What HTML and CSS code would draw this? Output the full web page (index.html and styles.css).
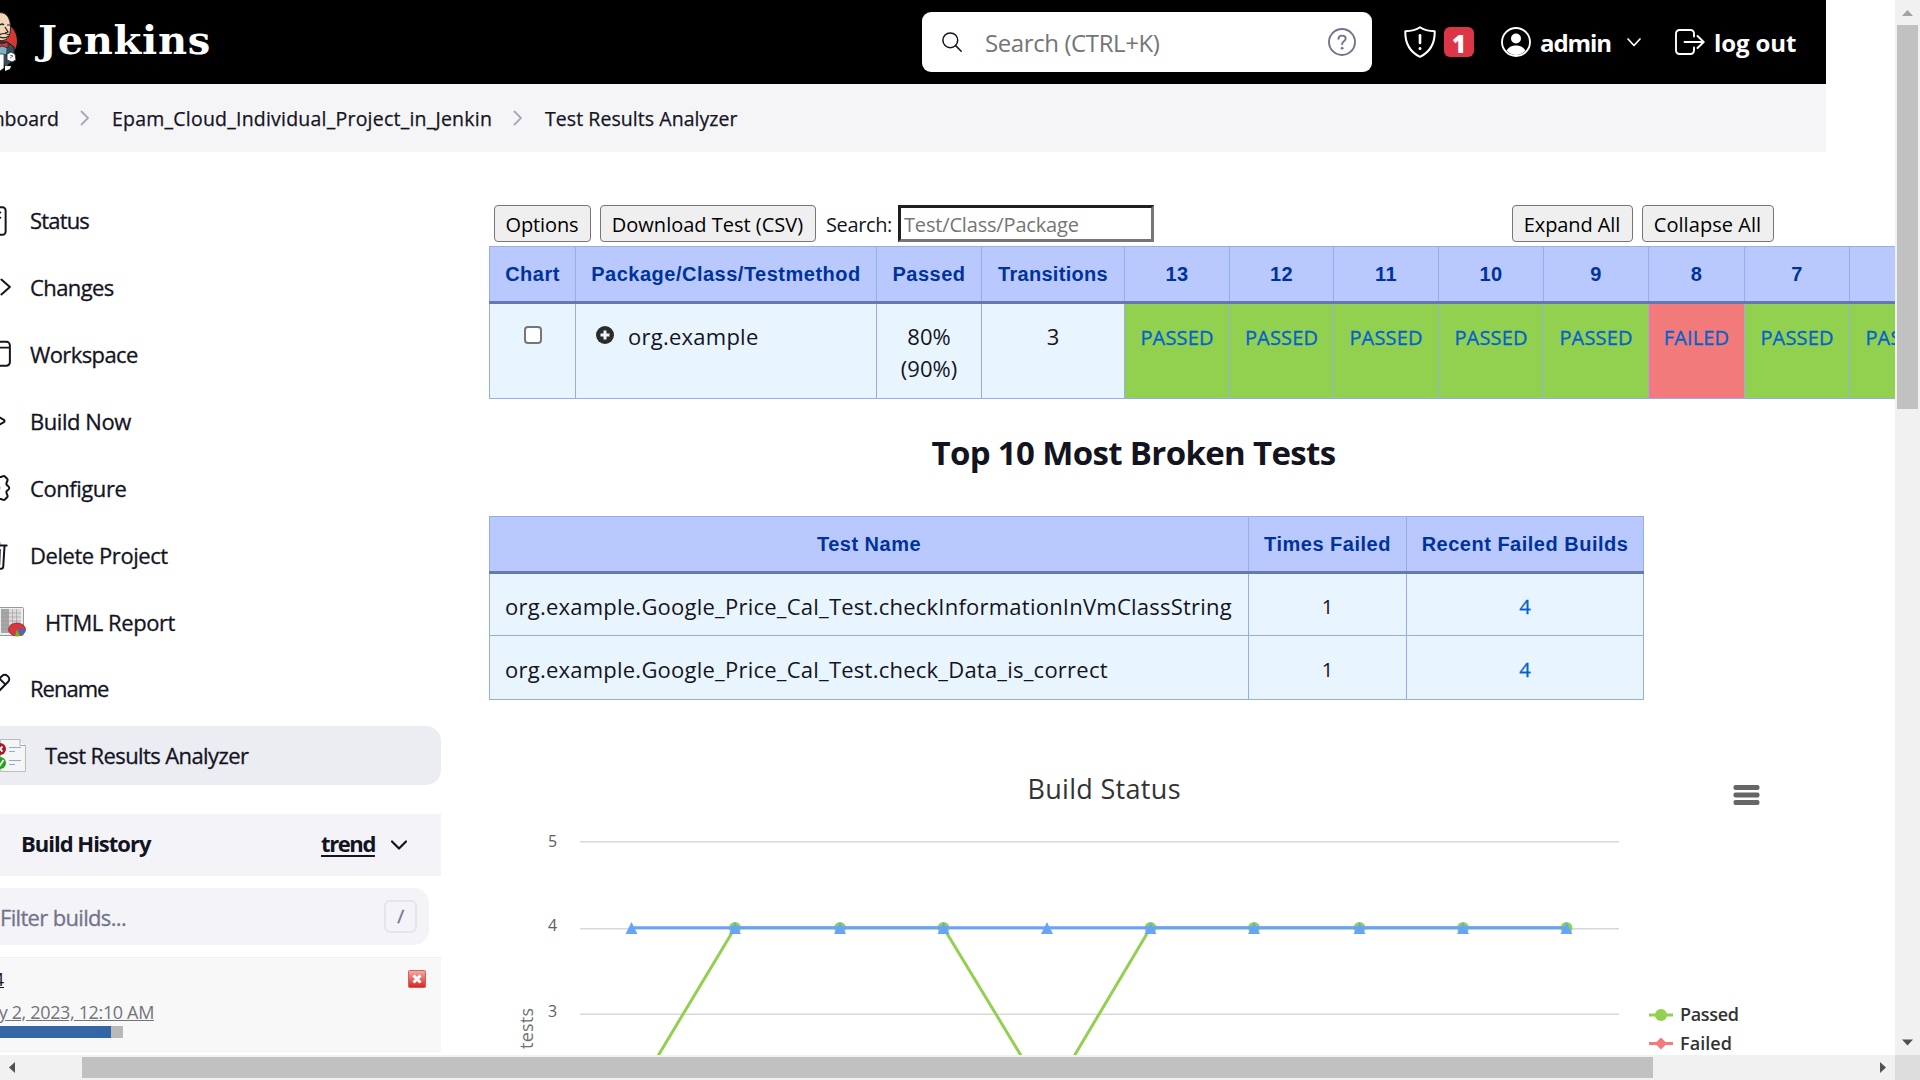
FILE: index.html
```html
<!DOCTYPE html>
<html lang="en">
<head>
<meta charset="utf-8">
<title>Test Results Analyzer [Jenkins]</title>
<link rel="stylesheet" href="styles.css">
</head>
<body>
<div class="window">
<div class="viewport"><div class="page">
  <header class="header">
    <a class="brand">
      <svg class="butler" viewBox="0 0 50 60"><circle cx="30" cy="29" r="20" fill="#d33833"/><path d="M14 48V36l8-6 18 0 7 5 1 12-6 5-20 4z" fill="#335061" stroke="#111" stroke-width="1"/><path d="M30 34l10-2-1 10-6 0z" fill="#81b0c4"/><path d="M24 42l13 0 0 14-4 3-11-1z" fill="#fff" stroke="#231f20" stroke-width=".7"/><path d="M37 43l4 0 1 8-4 6z" fill="#335061"/><path d="M38 54l6 0-1 3-5 2z" fill="#fff"/><path d="M18 18C18 6 26 .600 33 .600c7 0 10.500 6 10.500 15 0 8-3 13-9 13H27c-6 0-9-5-9-10.500z" fill="#f0d6b7" stroke="#231f20" stroke-width="1"/><path d="M33 13q2-2 4 0M40 13l3 0M38 15l3 5-3 1M32 23q5-3 10 0M33 25q4 2 8-.500" fill="none" stroke="#231f20" stroke-width="1.200"/><path d="M30 30l5 2 6-2v6l-6-2-5 2z" fill="#d33833" stroke="#231f20" stroke-width=".7"/><path d="M40 42l4-2 4 2 1 6-4 2-5-2z" fill="#fff" stroke="#231f20" stroke-width=".8"/><path d="M43 43l3 1-3 2" fill="none" stroke="#231f20" stroke-width=".6"/></svg>
      <span class="wordmark">Jenkins</span>
    </a>
    <div class="searchbox">
      <svg class="i-search" viewBox="0 0 20 20" fill="none" stroke="#14141f" stroke-width="1.5" stroke-linecap="round"><circle cx="8.3" cy="8.3" r="7.4"/><path d="M13.6 13.6l5.6 5.6"/></svg>
      <span class="search-text">Search (CTRL+K)</span>
      <svg class="i-help" viewBox="0 0 28 28" fill="none" stroke="#73738c" stroke-width="1.9" stroke-linecap="round"><circle cx="14" cy="14" r="13"/><path d="M10.4 10.8c.2-2.3 1.800-3.200 3.700-3.200 2 0 3.600 1.200 3.600 3 0 2.800-3.600 2.700-3.600 5.600"/><circle cx="14" cy="20.200" r="1" fill="#73738c" stroke-width="1"/></svg>
    </div>
    <svg class="i-shield" viewBox="0 0 32 32" fill="none" stroke="#fff" stroke-width="2" stroke-linecap="round" stroke-linejoin="round"><path d="M16 1.200C12 4 6 5 1.300 5.200 1 16 4 25 16 30.800 28 25 31 16 30.700 5.200 26 5 20 4 16 1.200z"/><path d="M16 9.200v7.800" stroke-width="2.600"/><circle cx="16" cy="22.500" r=".9" fill="#fff" stroke-width="1.200"/></svg>
    <span class="badge">1</span>
    <svg class="i-user" viewBox="0 0 30 30"><circle cx="15" cy="15" r="14" fill="none" stroke="#fff" stroke-width="1.900"/><circle cx="15" cy="11.500" r="5" fill="#fff"/><path d="M5.500 23.500C8 19.500 11.500 18.500 15 18.500s7 1 9.500 5A13 13 0 0 1 15 28a13 13 0 0 1-9.500-4.500z" fill="#fff"/></svg>
    <span class="hlink admin">admin</span>
    <svg class="i-down" viewBox="0 0 14 9" fill="none" stroke="#fff" stroke-width="1.700" stroke-linecap="round" stroke-linejoin="round"><path d="M1 1l6 6.500L13 1"/></svg>
    <svg class="i-logout" viewBox="0 0 30 26" fill="none" stroke="#fff" stroke-width="1.900" stroke-linecap="round" stroke-linejoin="round"><path d="M19 7.500V4.500a3.500 3.500 0 0 0-3.500-3.500h-11A3.500 3.500 0 0 0 1 4.500v17A3.500 3.500 0 0 0 4.500 25h11a3.500 3.500 0 0 0 3.500-3.500v-3M22.500 7l6.200 6-6.200 6M9.500 13h18.500"/></svg>
    <span class="hlink logout">log out</span>
  </header>
  <nav class="crumbs">
    <span class="c-dash">Dashboard</span>
    <svg class="i-sep" viewBox="0 0 9 16"><path d="M1 1l7 7-7 7"/></svg>
    <span class="c-proj">Epam_Cloud_Individual_Project_in_Jenkin</span>
    <svg class="i-sep" viewBox="0 0 9 16"><path d="M1 1l7 7-7 7"/></svg>
    <span class="c-page">Test Results Analyzer</span>
  </nav>
  <div class="columns">
    <aside class="side">
      <a class="task t-status"><svg class="icon" viewBox="0 0 512 512"><rect x="96" y="48" width="320" height="416" rx="48"/><path d="M176 128h160M176 208h160M176 288h80"/></svg><span>Status</span></a>
      <a class="task t-changes"><svg class="icon" viewBox="0 0 512 512"><path d="M160 368L32 256l128-112M352 368l128-112-128-112"/></svg><span>Changes</span></a>
      <a class="task"><svg class="icon" viewBox="0 0 512 512"><path d="M32 380V125a52 52 0 0 1 52-52h344a52 52 0 0 1 52 52v255a52 52 0 0 1-52 52H84a52 52 0 0 1-52-52zM32 160h448"/></svg><span>Workspace</span></a>
      <a class="task t-tight"><svg class="icon" viewBox="0 0 512 512"><path d="M112 111v290c0 17.400 17 28.500 31 20.200l247-148.300c12.700-7.600 12.700-26.200 0-33.800L143 90.800c-14-8.300-31 2.800-31 20.200z"/></svg><span>Build Now</span></a>
      <a class="task t-tight"><svg class="icon" viewBox="0 0 512 512"><path d="M262.300 192.100a64 64 0 1 0 57.600 57.600 64.100 64.100 0 0 0-57.600-57.600zM470.400 256a35 35 0 0 1-18 29l-22 20c-5 9-4 20 0 30l14 34c4 12 0 22-9 31l-26 26c-9 9-18 11-30 8l-34-12c-10-3-20-3-29 3l-18 28a32 32 0 0 1-58 0l-18-28c-9-6-19-6-29-3l-34 12c-12 3-21 1-30-8l-26-26c-9-9-13-19-9-31l14-34c4-10 5-21 0-30l-28-20a35 35 0 0 1 0-58l28-20c5-9 4-20 0-30l-14-34c-4-12 0-22 9-31l26-26c9-9 18-11 30-8l34 12c10 3 20 3 29-3l18-28a32 32 0 0 1 58 0l18 28c9 6 19 6 29 3l34-12c12-3 21-1 30 8l26 26c9 9 13 19 9 31l-14 34c-4 10-5 21 0 30l22 20a35 35 0 0 1 18 29z"/></svg><span>Configure</span></a>
      <a class="task t-tight"><svg class="icon" viewBox="0 0 512 512"><path d="M112 112l20 320c1 18.500 14.400 32 32 32h184c17.700 0 30.800-13.500 32-32l20-320M80 112h352M192 112V72a24 24 0 0 1 24-24h80a24 24 0 0 1 24 24v40M256 176v224M184 176l8 224M328 176l-8 224"/></svg><span>Delete Project</span></a>
      <a class="task t-tight"><svg class="pic" viewBox="0 0 48 36"><rect x="8.500" y="3.500" width="37" height="28" rx="1" fill="#eee" stroke="#999"/><path d="M23 5h8v24h-8z" fill="#a6a6a6"/><path d="M31 5h12v24H31z" fill="#dcdcdc"/><path d="M34.500 5v24M38.500 5v24M23 9h20M23 13h20M23 17h20M23 21h20M23 25h20" stroke="#999" stroke-width=".6"/><ellipse cx="39" cy="25.500" rx="8.500" ry="6.500" fill="#d93640" stroke="#8c1520" stroke-width=".7"/><path d="M39 25h8.500a8 6 0 0 1-4 6z" fill="#476bb3"/><path d="M39 25l3 7h-5z" fill="#61bb27"/></svg><span>HTML Report</span></a>
      <a class="task t-rename"><svg class="icon" viewBox="0 0 512 512"><path d="M364 58L92 330 48 464l134-44L454 148a54 54 0 0 0 0-78l-12-12a54 54 0 0 0-78 0zM325 100l86 86"/></svg><span>Rename</span></a>
      <a class="task active"><svg class="pic" viewBox="0 0 48 36"><path d="M22.500 1.500H42l5.500 6v26h-25z" fill="#f5f5f5" stroke="#bbb"/><path d="M42 1.500v6h5.500" fill="#fff" stroke="#aaa"/><path d="M31 9.500h12M31 13.500h6M31 22.500h12M31 26.500h6" stroke="#89b0d4" stroke-width="1"/><circle cx="22" cy="11" r="6" fill="#a51a22"/><path d="M19.500 8.500l5 5m0-5l-5 5" stroke="#fff" stroke-width="1.800"/><circle cx="22" cy="25" r="6" fill="#1fa51c"/><path d="M19 25l2.500 3 4-6" fill="none" stroke="#fff" stroke-width="1.800"/></svg><span>Test Results Analyzer</span></a>
      <section class="history">
        <div class="h-head"><b>Build History</b><u>trend</u><svg viewBox="0 0 16 10"><path d="M1 1.500l7 7 7-7" fill="none" stroke="#14141f" stroke-width="2.200" stroke-linecap="round" stroke-linejoin="round"/></svg></div>
        <div class="filter"><span>Filter builds...</span><kbd>/</kbd></div>
        <div class="build">
          <div class="b-top"><u>#14</u><svg viewBox="0 0 18 18"><defs><linearGradient id="stop" x2="0" y2="1"><stop stop-color="#efb0ac"/><stop offset="1" stop-color="#d8231d"/></linearGradient></defs><rect x=".5" y=".5" width="17" height="17" rx="1" fill="url(#stop)" stroke="#dc5a57"/><path d="M5.500 5.500l7 7m0-7l-7 7" stroke="#fff" stroke-width="3"/></svg></div>
          <u class="b-date">May 2, 2023, 12:10 AM</u>
          <div class="bar"><i></i></div>
        </div>
      </section>
    </aside>
    <main class="main">
      <div class="tools">
        <button>Options</button><button class="dl">Download Test (CSV)</button><label>Search:</label><span class="input">Test/Class/Package</span>
        <button class="expand">Expand All</button><button class="collapse">Collapse All</button>
      </div>
      <table class="grid results">
        <colgroup><col class="w86"><col class="w301"><col class="w105"><col class="w143"><col class="w105"><col class="w104"><col class="w105"><col class="w105"><col class="w105"><col class="w96"><col class="w105"><col class="w105"></colgroup>
        <tr><th>Chart</th><th>Package/Class/Testmethod</th><th>Passed</th><th class="snug">Transitions</th><th>13</th><th>12</th><th>11</th><th>10</th><th>9</th><th>8</th><th>7</th><th>6</th></tr>
        <tr><td><i class="check"></i></td><td class="name"><svg viewBox="0 0 18 18"><circle cx="9" cy="9" r="9" fill="#2b2b2b"/><path d="M9 4.500v9M4.500 9h9" stroke="#e8f4fe" stroke-width="3"/></svg><span>org.example</span></td><td>80%<br>(90%)</td><td>3</td><td class="ok">PASSED</td><td class="ok">PASSED</td><td class="ok">PASSED</td><td class="ok">PASSED</td><td class="ok">PASSED</td><td class="bad">FAILED</td><td class="ok">PASSED</td><td class="ok">PASSED</td></tr>
      </table>
      <h2>Top 10 Most Broken Tests</h2>
      <table class="grid broken">
        <colgroup><col class="w759"><col class="w158"><col class="w237"></colgroup>
        <tr><th>Test Name</th><th>Times Failed</th><th>Recent Failed Builds</th></tr>
        <tr><td class="left">org.example.Google_Price_Cal_Test.checkInformationInVmClassString</td><td class="n">1</td><td class="n link">4</td></tr>
        <tr><td class="left">org.example.Google_Price_Cal_Test.check_Data_is_correct</td><td class="n">1</td><td class="n link">4</td></tr>
      </table>
      <svg class="chart" viewBox="489 750 1406 350">
        <text class="title" x="1027.500" y="799" textLength="153">Build Status</text>
        <g fill="#666"><rect x="1733.500" y="785" width="26" height="5" rx="2"/><rect x="1733.500" y="792.500" width="26" height="5" rx="2"/><rect x="1733.500" y="800" width="26" height="5" rx="2"/></g>
        <path d="M580 841.700h1039M580 928.700h1039M580 1014.200h1039" stroke="#d8d8d8" stroke-width="1.500"/>
        <g class="ax"><text x="548" y="847">5</text><text x="548" y="931">4</text><text x="548" y="1017">3</text></g>
        <text class="ytitle" transform="translate(533 1049) rotate(-90)" textLength="41">tests</text>
        <path d="M631.500 1100L735 927.700H943.500L1048 1100 1150.500 927.700H1566.500" fill="none" stroke="#92d050" stroke-width="3"/>
        <g fill="#92d050"><circle cx="735" cy="928" r="6"/><circle cx="840" cy="928" r="6"/><circle cx="943.500" cy="928" r="6"/><circle cx="1150.500" cy="928" r="6"/><circle cx="1254" cy="928" r="6"/><circle cx="1359.500" cy="928" r="6"/><circle cx="1463" cy="928" r="6"/><circle cx="1566.500" cy="928" r="6"/></g>
        <path d="M631.500 927.700H1566.500" stroke="#67a3f7" stroke-width="3"/>
        <path fill="#67a3f7" d="M631.500 922l6 12h-12zM735 922l6 12h-12zM840 922l6 12h-12zM943.500 922l6 12h-12zM1047 922l6 12h-12zM1150.500 922l6 12h-12zM1254 922l6 12h-12zM1359.500 922l6 12h-12zM1463 922l6 12h-12zM1566.500 922l6 12h-12z"/>
        <path d="M1649 1015h24" stroke="#92d050" stroke-width="3"/><circle cx="1661" cy="1015" r="6" fill="#92d050"/>
        <path d="M1649 1043.500h24" stroke="#f37a7a" stroke-width="3"/><path d="M1661 1037.500l6 6-6 6-6-6z" fill="#f37a7a"/>
        <g class="lg"><text x="1680" y="1021" textLength="59">Passed</text><text x="1680" y="1050" textLength="52">Failed</text></g>
      </svg>
    </main>
  </div>
</div></div>
<div class="vbar"><svg viewBox="0 0 25 25"><path d="M7 16l5.500-6 5.500 6z" fill="#a3a3a3"/></svg><i></i><svg viewBox="0 0 25 25"><path d="M7 9.500l5.500 6 5.500-6z" fill="#505050"/></svg></div>
<div class="hbar"><svg viewBox="0 0 25 25"><path d="M15 7l-6 5.500 6 5.500z" fill="#505050"/></svg><i></i><svg viewBox="0 0 25 25"><path d="M10 7l6 5.500-6 5.500z" fill="#505050"/></svg></div>
<div class="corner"></div>
</div>
</body>
</html>
```
FILE: styles.css
```css
* { box-sizing: border-box; }
body { margin: 0; background: #fff; color: #14141f; font-family: "Open Sans", "Noto Sans", sans-serif; overflow: hidden; }
svg { flex: none; display: block; }
.window { display: grid; grid-template: 1055px 25px / 1895px 25px; width: 1920px; height: 1080px; }
.viewport { overflow: hidden; }
.page { width: 2225px; margin-left: -69px; }

.header { width: 1895px; height: 84px; background: #000; color: #fff; display: flex; align-items: center; }
.brand { display: flex; align-items: center; width: 991px; padding-left: 36px; }
.butler { width: 50px; height: 60px; }
.wordmark { margin: -4px 0 0 21px; font: bold 40px/60px "DejaVu Serif", serif; letter-spacing: .72px; white-space: nowrap; }
.searchbox { width: 450px; height: 60px; border-radius: 9px; background: #fff; display: flex; align-items: center; padding: 0 16px 0 20px; }
.i-search { width: 20px; height: 20px; }
.search-text { margin: 2px 0 0 23px; font-size: 24px; line-height: 34px; letter-spacing: -.4px; color: #757575; white-space: nowrap; }
.i-help { width: 28px; height: 28px; margin-left: auto; }
.i-shield { width: 32px; height: 32px; margin-left: 32px; }
.badge { width: 30px; height: 30px; margin: 0 27px 0 8px; border-radius: 6px; background: #dc3545; font-weight: 800; font-size: 24px; line-height: 33px; text-align: center; }
.i-user { width: 30px; height: 30px; }
.hlink { font-weight: 700; font-size: 24px; line-height: 34px; margin: 2px 0 0 9px; white-space: nowrap; }
.admin { width: 71px; letter-spacing: -1.07px; }
.logout { letter-spacing: -.1px; }
.i-down { width: 14px; height: 9px; margin: 0 34px 0 16px; }
.i-logout { width: 30px; height: 26px; }

.crumbs { width: 1895px; height: 68px; background: #f5f5f8; display: flex; align-items: center; font-size: 19.5px; font-weight: 500; -webkit-text-stroke: .25px; white-space: nowrap; padding: 1px 0 0; }
.c-dash { width: 128px; text-align: right; }
.c-proj { width: 380px; letter-spacing: .22px; }
.c-page { letter-spacing: .06px; }
.i-sep { width: 9px; height: 16px; margin: -1px 23px 0 21px; fill: none; stroke: #a6a6bb; stroke-width: 1.8; }

.columns { display: grid; grid-template-columns: 510px 1667px; column-gap: 48px; }
.side { padding-top: 39px; }
.task { display: flex; align-items: center; height: 59px; margin-bottom: 7.875px; padding-left: 47px; font-size: 22px; font-weight: 500; letter-spacing: -.6px; white-space: nowrap; border-radius: 15px; }
.task span { margin: 0 0 0 18px; -webkit-text-stroke: .3px; }
.task .pic + span { margin-left: 19px; }
.task.t-status span, .task.t-rename span, .task.active span { margin-top: -2px; }
.t-status { letter-spacing: -.83px; }
.t-changes { letter-spacing: -.6px; }
.t-tight { letter-spacing: -.44px; }
.t-rename { letter-spacing: -1px; }
.active { background: #ececf3; }
.icon { width: 34px; height: 34px; fill: none; stroke: #14141f; stroke-width: 30; stroke-linecap: round; stroke-linejoin: round; }
.pic { width: 48px; height: 36px; }

.history { margin-top: 29px; margin-left: 40px; white-space: nowrap; }
.h-head { height: 62px; background: #f3f3f8; display: flex; align-items: center; font-size: 22px; font-weight: 600; padding: 0 34px 5px 50px; }
.h-head b { font-weight: 700; letter-spacing: -1px; }
.h-head u { margin-left: auto; width: 54px; font-weight: 700; letter-spacing: -1.4px; text-underline-offset: 3px; text-decoration-thickness: 2px; }
.h-head svg { width: 16px; height: 10px; margin: 5px 0 0 16px; }
.filter { margin: 12px 12px 12px 0; height: 57px; border-radius: 15px; background: #f3f3f8; color: #73738c; font-size: 22px; font-weight: 500; letter-spacing: -.67px; -webkit-text-stroke: .3px; display: flex; align-items: center; justify-content: space-between; padding: 0 12px 0 29px; }
.filter kbd { width: 33px; height: 33px; border: 2px solid #e4e4ee; border-radius: 6px; font: 500 19px/28px "Open Sans", sans-serif; text-align: center; }
.build { height: 95px; background: #f8f8f8; border: solid #efefef; border-width: 1px 0; padding: 7px 15px 0 0; font-size: 18px; }
.b-top { display: flex; justify-content: space-between; align-items: center; height: 28px; }
.b-top u { width: 33px; text-align: right; }
.b-top svg { width: 18px; height: 18px; }
.b-date { display: block; width: 223px; margin: 7px 0 0 -40px; text-align: right; color: #73737b; line-height: 24px; letter-spacing: -.35px; }
.bar { width: 152px; height: 12px; background: #b8b8b8; margin-top: 2px; }
.bar i { display: block; width: 140px; height: 12px; background: #3465a4; }

.main { padding-top: 53px; }
.tools { display: flex; height: 37px; padding-left: 5px; width: 1285px; font-size: 20px; line-height: 39px; white-space: nowrap; margin-bottom: 4px; }
.tools button { width: 97px; padding: 2px 1px 0 0; border: 1px solid #767676; border-radius: 4px; background: #efefef; color: #000; font: 20px/33px "Open Sans", sans-serif; letter-spacing: -.1px; }
.tools .dl { width: 216px; margin: 0 10px 0 9px; letter-spacing: 0; }
.tools label { width: 72px; letter-spacing: -.37px; }
.input { width: 256px; border: 3px solid #767676; border-color: #1f1f1f #767676 #767676 #1f1f1f; padding-left: 3px; line-height: 33px; letter-spacing: -.17px; color: #757575; }
.tools .expand { width: 121px; margin-left: auto; }
.tools .collapse { width: 132px; margin-left: 9px; letter-spacing: .05px; }

.grid { table-layout: fixed; border-collapse: collapse; border: 1px solid #95aeea; }
.results { width: 1466px; }
.broken { width: 1155px; }
.w86 { width: 86px; } .w96 { width: 96px; } .w104 { width: 104px; } .w105 { width: 105px; } .w143 { width: 143px; } .w158 { width: 158px; } .w237 { width: 237px; } .w301 { width: 301px; } .w759 { width: 759px; }
.grid th { height: 56px; padding: 0; border: 1px solid #95aeea; border-bottom: 3px solid #6678b1; background: #b9c9fe; color: #039; font: bold 20px/24px "Liberation Sans", sans-serif; letter-spacing: .5px; white-space: nowrap; }
.grid th.snug { letter-spacing: .3px; }
.grid td { border: 1px solid #95aeea; background: #e8f4fe; text-align: center; padding: 0; font-size: 22px; line-height: 32px; white-space: nowrap; }
.results td { height: 96px; vertical-align: top; padding-top: 16px; }
.results td.ok, .results td.bad { background: #92d050; color: #0062cc; font-size: 20px; font-weight: 500; -webkit-text-stroke: .3px; letter-spacing: .15px; line-height: 35px; }
.results td.bad { background: #f37a7a; }
.check { display: block; width: 18px; height: 18px; margin: 6px auto; border: 2px solid #767676; border-radius: 4px; background: #fff; }
.results .name svg { display: inline-block; width: 18px; height: 18px; margin: 0 14px 0 20px; vertical-align: 1px; }
.results .name { text-align: left; letter-spacing: .25px; }
.broken td { height: 63px; padding-top: 3px; }
.broken tr:last-child td { height: 64px; }
.broken td.left { text-align: left; padding-left: 15px; letter-spacing: .235px; }
.broken td.n { font-size: 20px; padding-top: 4px; }
.broken td.link { color: #0062cc; -webkit-text-stroke: .3px; }
h2 { margin: 0; width: 1289px; height: 117px; padding-top: 31px; text-align: center; font-size: 33px; line-height: 46px; font-weight: 700; letter-spacing: -.65px; white-space: nowrap; }

.chart { width: 1406px; height: 350px; margin-top: 50px; }
.title { font-size: 27px; fill: #333; }
.ax { font-size: 16px; fill: #606060; }
.ytitle { font-size: 18px; fill: #707070; }
.lg { font-size: 18px; font-weight: 600; fill: #333; }

.vbar { background: #f1f1f1; }
.vbar svg, .hbar svg { width: 25px; height: 25px; }
.vbar i { display: block; width: 21px; height: 384px; margin: 0 2px 621px; background: #c1c1c1; }
.hbar { background: #f1f1f1; display: flex; align-items: center; }
.hbar i { width: 1571px; height: 21px; margin: 0 217px 0 57px; background: #c1c1c1; }
.corner { background: #dcdcdc; }
```
